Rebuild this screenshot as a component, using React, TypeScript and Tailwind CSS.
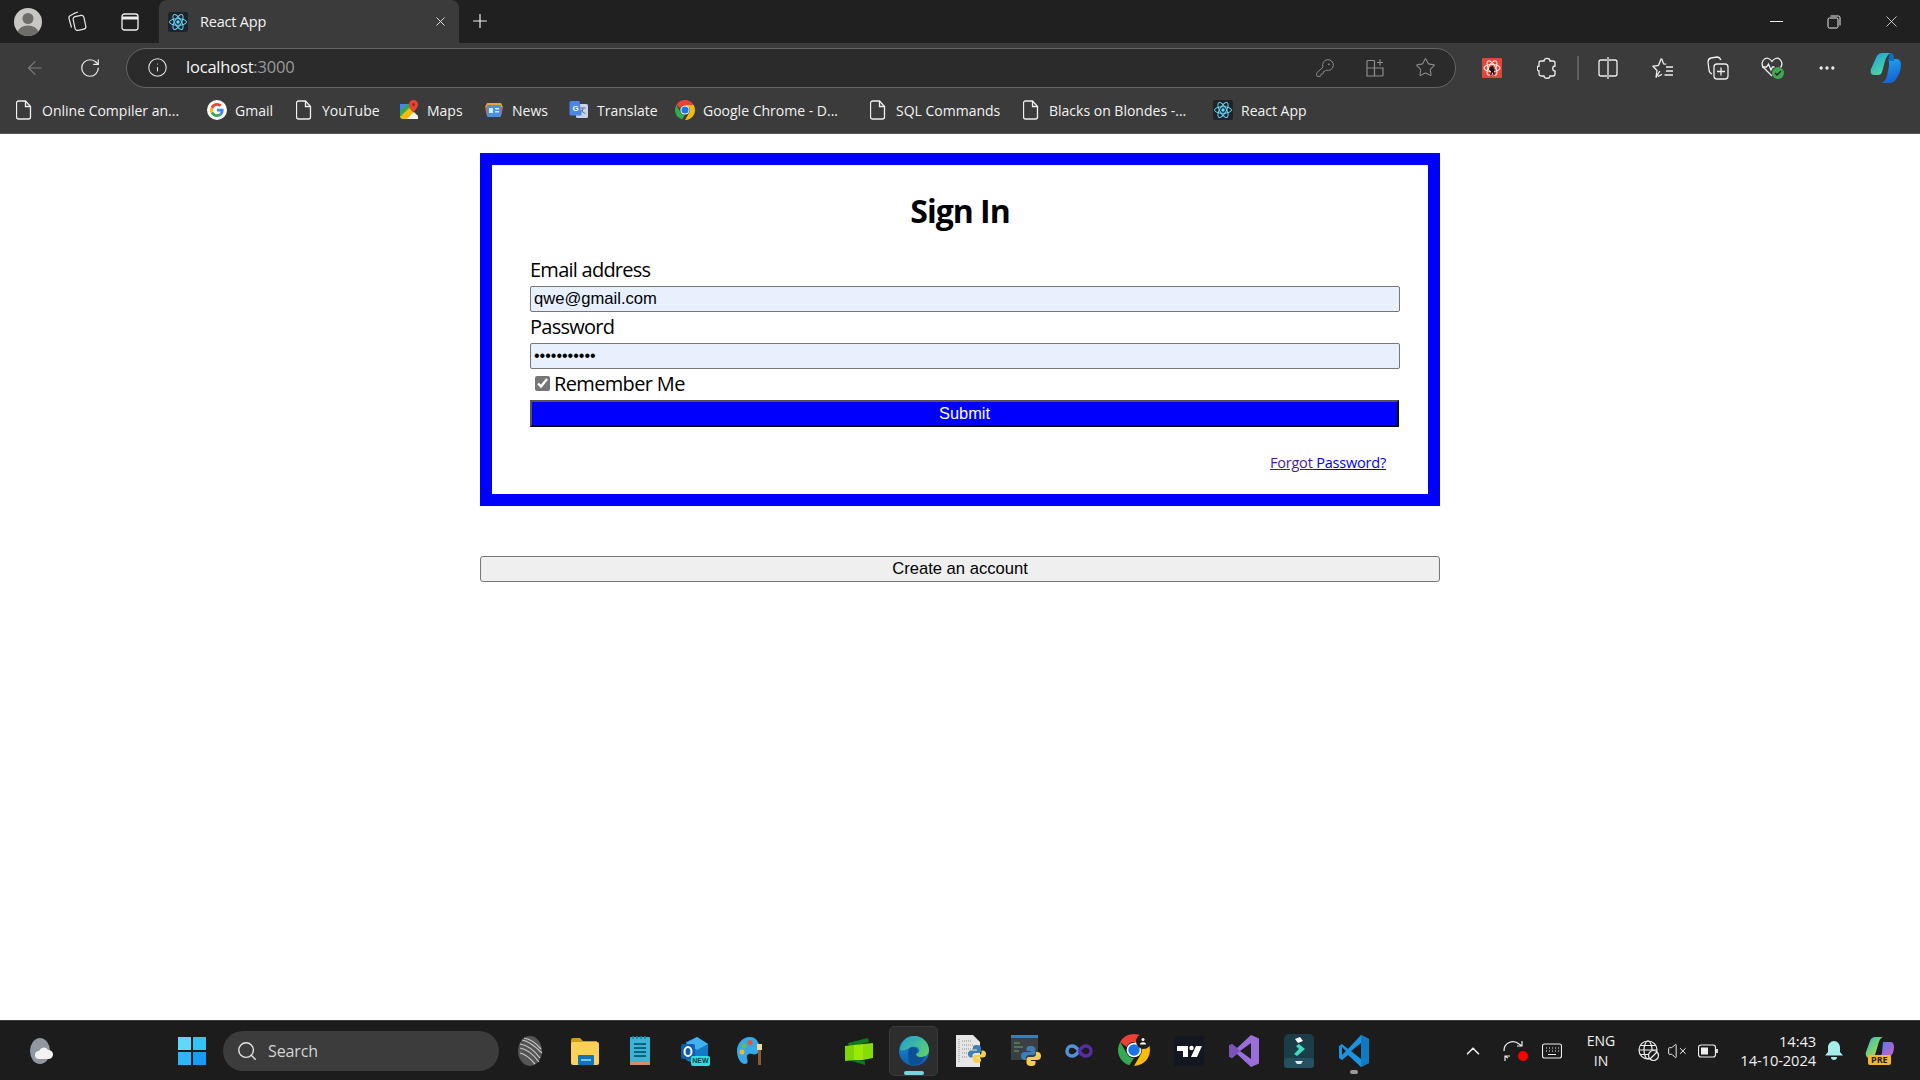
import { ReactNode } from "react";
import { ArrowLeft, ChevronUp, Info, KeyRound, MoreHorizontal, Plus, RotateCw, Search, Star, VolumeX, X } from "lucide-react";

const uiFont = "font-['Open_Sans','Noto_Sans',sans-serif]";

function ReactLogo({ size = 20 }: { size?: number }) {
  return (
    <svg width={size} height={size} viewBox="0 0 20 20">
      <rect width="20" height="20" rx="2" fill="#20232a" />
      <g fill="none" stroke="#61dafb" strokeWidth="1">
        <ellipse cx="10" cy="10" rx="8.5" ry="3.3" />
        <ellipse cx="10" cy="10" rx="8.5" ry="3.3" transform="rotate(60 10 10)" />
        <ellipse cx="10" cy="10" rx="8.5" ry="3.3" transform="rotate(120 10 10)" />
      </g>
      <circle cx="10" cy="10" r="1.7" fill="#61dafb" />
    </svg>
  );
}

function DocIcon() {
  return (
    <svg width="16" height="20" viewBox="0 0 16 20" fill="none" stroke="#f0f0f0" strokeWidth="1.3">
      <path d="M2.5 1h7l5 5.5v10.5a2 2 0 0 1-2 2h-10a2 2 0 0 1-2-2v-14a2 2 0 0 1 2-2z" />
      <path d="M9.5 1v5.5h5" />
    </svg>
  );
}

function GoogleLogo() {
  return (
    <svg width="20" height="20" viewBox="0 0 20 20">
      <circle cx="10" cy="10" r="10" fill="#fff" />
      <path d="M16.6 10.2c0-.5 0-1-.1-1.400H10v2.700h3.700c-.2.900-.7 1.600-1.400 2.100l2.200 1.700c1.300-1.200 2.100-3 2.100-5.100z" fill="#4285f4" />
      <path d="M10 17c1.900 0 3.400-.6 4.500-1.700l-2.200-1.700c-.6.400-1.400.7-2.300.7-1.800 0-3.300-1.200-3.900-2.800l-2.300 1.800C5 15.500 7.300 17 10 17z" fill="#34a853" />
      <path d="M6.100 11.500c-.3-.9-.3-1.900 0-2.800L3.800 6.900c-1 1.900-1 4.300 0 6.300z" fill="#fbbc05" />
      <path d="M10 5.800c1 0 1.900.3 2.600 1l2-2C13.400 3.700 11.800 3 10 3 7.300 3 5 4.500 3.800 6.900l2.300 1.800C6.700 7 8.200 5.800 10 5.800z" fill="#ea4335" />
    </svg>
  );
}

function MapsLogo() {
  return (
    <svg width="20" height="20" viewBox="0 0 20 20">
      <path d="M1 4l9 0 7 15H3a2 2 0 0 1-2-2z" fill="#34a853" />
      <path d="M1 17L10 8l9 9v1a1 1 0 0 1-1 1H3z" fill="#fbbc05" />
      <path d="M1 4h7L1 11z" fill="#4285f4" />
      <path d="M8 19l7-7 4 4v3z" fill="#f1f3f4" />
      <path d="M14.500 0a4.500 4.500 0 0 0-4.500 4.500c0 3 4.500 7.500 4.500 7.500S19 7.500 19 4.500A4.500 4.500 0 0 0 14.500 0z" fill="#ea4335" />
      <circle cx="14.500" cy="4.500" r="1.500" fill="#a52714" />
    </svg>
  );
}

function NewsLogo() {
  return (
    <svg width="20" height="20" viewBox="0 0 20 20">
      <path d="M3 3h14l2 4H1z" fill="#e3a33a" />
      <path d="M1 7h18l-1.500 8h-15z" fill="#e05b4b" />
      <rect x="3" y="5" width="14" height="12" rx="1" fill="#4a90e2" />
      <rect x="5" y="8" width="4" height="5" fill="#dbe8fa" />
      <rect x="11" y="8" width="4" height="1.500" fill="#dbe8fa" />
      <rect x="11" y="11" width="4" height="1.500" fill="#dbe8fa" />
    </svg>
  );
}

function TranslateLogo() {
  return (
    <svg width="20" height="20" viewBox="0 0 20 20">
      <rect x="7" y="4" width="12" height="14" rx="1.500" fill="#c9d3e6" />
      <path d="M11.500 8h5M14 8c0 3-2 5-3 5.500M12 10c1 1.500 3 3 4.500 3.500" stroke="#5f6b80" strokeWidth="1" fill="none" />
      <path d="M2 1h8.500l2 14.500H2a1.500 1.500 0 0 1-1.500-1.500V2.500A1.500 1.500 0 0 1 2 1z" fill="#4a86e8" />
      <text x="3.500" y="11" fontSize="8" fontWeight="700" fill="#fff" fontFamily="'Liberation Sans', sans-serif">G</text>
    </svg>
  );
}

function ChromeLogo({ size = 20 }: { size?: number }) {
  return (
    <svg width={size} height={size} viewBox="0 0 20 20">
      <path d="M10 0a10 10 0 0 1 8.660 5H10a5 5 0 0 0-4.660 3.200L1.340 5A10 10 0 0 1 10 0z" fill="#ea4335" />
      <path d="M1.340 5L5.700 12.500A5 5 0 0 0 10 15l-2.900 4.570A10 10 0 0 1 1.340 5z" fill="#34a853" />
      <path d="M18.660 5A10 10 0 0 1 10 20l4.330-7.500A5 5 0 0 0 14.330 7.500L10 5z" fill="#fbbc05" />
      <circle cx="10" cy="10" r="4.600" fill="#fff" />
      <circle cx="10" cy="10" r="3.600" fill="#1a73e8" />
    </svg>
  );
}

function Bookmark({ icon, label, width, left }: { icon: ReactNode; label: string; width: string; left: string }) {
  return (
    <div className={`flex items-center ${left}`}>
      <span className="flex w-[20px] justify-center">{icon}</span>
      <span className={`ml-[8px] whitespace-nowrap text-[14px] text-[#f3f3f3] ${width}`}>{label}</span>
    </div>
  );
}

function TabStrip() {
  return (
    <div className="flex h-[43px] items-end bg-[#202020]">
      <div className="ml-[14px] mb-[7px] flex h-[28px] w-[28px] items-end justify-center overflow-hidden rounded-full bg-[#c9c7c3]">
        <svg width="28" height="28" viewBox="0 0 28 28" fill="#6f6d6a">
          <circle cx="14" cy="10.500" r="5.500" />
          <ellipse cx="14" cy="24" rx="10" ry="6.500" />
        </svg>
      </div>
      <div className="ml-[24px] mb-[11px]">
        <svg width="22" height="22" viewBox="0 0 22 22" fill="none" stroke="#e8e8e8" strokeWidth="1.200">
          <rect x="8" y="6" width="11" height="14" rx="2.500" transform="rotate(-12 13 13)" />
          <path d="M5.500 17.500L3 8.500a2.500 2.500 0 0 1 1.500-3l4.500-2.500" />
          <path d="M8 3.500l4-1.500" />
        </svg>
      </div>
      <div className="ml-[33px] mb-[12px]">
        <svg width="18" height="18" viewBox="0 0 18 18" fill="none" stroke="#eeeeee" strokeWidth="1.300">
          <rect x="1" y="1" width="16" height="16" rx="2.500" />
          <path d="M1 5h16" strokeWidth="3" />
        </svg>
      </div>
      <div className={`ml-[20px] flex h-[43px] w-[300px] items-center rounded-t-[8px] bg-[#3b3b3b] pl-[9px] ${uiFont}`}>
        <ReactLogo />
        <span className="ml-[12px] text-[14.500px] tracking-[-0.2px] text-[#f3f3f3]">React App</span>
        <X className="ml-auto mr-[11px] text-[#e5e5e5]" size={15} strokeWidth={1.500} />
      </div>
      <Plus className="ml-[10px] mb-[11px] text-[#eeeeee]" size={22} strokeWidth={1.300} />
      <div className="ml-auto flex items-center self-center text-[#eeeeee]">
        <div className="w-[57px]"><div className="mx-auto h-[1px] w-[13px] bg-[#eeeeee]" /></div>
        <div className="flex w-[57px] justify-center">
          <svg width="14" height="14" viewBox="0 0 14 14" fill="none" stroke="#eeeeee" strokeWidth="1">
            <rect x="1" y="3" width="10" height="10" rx="1.500" />
            <path d="M3.500 1h8a1.500 1.500 0 0 1 1.500 1.500v8" />
          </svg>
        </div>
        <div className="flex w-[58px] justify-center"><X size={19} strokeWidth={1} /></div>
      </div>
    </div>
  );
}

function RedExtension() {
  return (
    <svg width="20" height="20" viewBox="0 0 20 20">
      <rect width="20" height="20" rx="1" fill="#e0473a" />
      <g fill="none" stroke="#fbe5e2" strokeWidth="1.100">
        <ellipse cx="10" cy="10" rx="8" ry="3.500" />
        <ellipse cx="10" cy="10" rx="8" ry="3.500" transform="rotate(60 10 10)" />
        <ellipse cx="10" cy="10" rx="8" ry="3.500" transform="rotate(120 10 10)" />
      </g>
      <path d="M8 9l3-1 1 3 2 1-2 1 1 4h-1.500l-1-3-1 3H8l1-4-2-1z" fill="#1a1a1a" />
    </svg>
  );
}

function Toolbar() {
  return (
    <div className={`flex h-[45px] items-center bg-[#3b3b3b] pt-[4px] ${uiFont}`}>
      <ArrowLeft className="ml-[24px] text-[#7d7d7d]" size={22} strokeWidth={1.200} />
      <RotateCw className="ml-[33px] text-[#eeeeee]" size={22} strokeWidth={1.300} />
      <div className="ml-[25px] flex h-[40px] w-[1330px] items-center rounded-full border border-[#666666] bg-[#2b2b2b] pl-[20px] pr-[19px]">
        <Info className="text-[#e8e8e8]" size={21} strokeWidth={1.200} />
        <span className="ml-[18px] text-[16.500px] tracking-[-0.2px] text-[#f5f5f5]">
          localhost<span className="text-[#9a9a9a]">:3000</span>
        </span>
        <KeyRound className="ml-auto text-[#8d8d8d]" size={20} strokeWidth={1.200} />
        <svg className="ml-[30px]" width="20" height="20" viewBox="0 0 20 20" fill="none" stroke="#8d8d8d" strokeWidth="1.200">
          <path d="M9.500 2.500H3a1 1 0 0 0-1 1V18h15a1 1 0 0 0 1-1V10H2M9.500 2.500V18" />
          <path d="M15 1.500v6M12 4.500h6" />
        </svg>
        <Star className="ml-[30px] text-[#8d8d8d]" size={21} strokeWidth={1.200} />
      </div>
      <span className="ml-[26px]"><RedExtension /></span>
      <svg className="ml-[35px]" width="20" height="22" viewBox="0 0 20 22" fill="none" stroke="#eeeeee" strokeWidth="1.300">
        <path d="M7 4c0-3.500 6-3.500 6 0h3a2 2 0 0 1 2 2v3c-3 0-3 5 0 5v3a2 2 0 0 1-2 2h-3c0 3-6 3-6 0H4a2 2 0 0 1-2-2v-3c-2.500 0-2.500-5 0-5V6a2 2 0 0 1 2-2z" />
      </svg>
      <div className="ml-[20px] h-[24px] w-[2px] bg-[#5f5f5f]" />
      <svg className="ml-[19px]" width="20" height="22" viewBox="0 0 20 22" fill="none" stroke="#eeeeee" strokeWidth="1.300">
        <path d="M9 3H3a2 2 0 0 0-2 2v12a2 2 0 0 0 2 2h6M11 3h6a2 2 0 0 1 2 2v12a2 2 0 0 1-2 2h-6M10 0v22" />
      </svg>
      <svg className="ml-[34px]" width="22" height="22" viewBox="0 0 22 22" fill="none" stroke="#eeeeee" strokeWidth="1.300">
        <path d="M9.500 1.500l2.200 5.500 2.500.2M7.800 14l-3.800 6.500 1-7-4-4.200 5.500-1 2.800-6.800M6 19.500l4-2.200" />
        <path d="M14 10h7M14 14h7M12.500 18h8.500" />
      </svg>
      <svg className="ml-[33px]" width="22" height="24" viewBox="0 0 22 24" fill="none" stroke="#eeeeee" strokeWidth="1.300">
        <path d="M5 18c-2-1-3-2-3-4L1 6c0-2 1-3.500 3-4l6-1c2 0 3 1 4 3" />
        <rect x="7" y="8" width="14" height="15" rx="3" />
        <path d="M14 11.500v8M10 15.500h8" />
      </svg>
      <div className="relative ml-[32px] h-[24px] w-[22px]">
        <svg width="22" height="22" viewBox="0 0 22 22" fill="none" stroke="#eeeeee" strokeWidth="1.300">
          <path d="M11 20L2.500 11.500C-1 7 3 1 7.500 2.500c1.500.5 2.500 1.500 3.500 3 1-1.500 2-2.500 3.500-3C19 1 23 7 19.500 11.500" />
          <path d="M1 11h4.500l2-3 2.500 6 1.500-3h2" />
        </svg>
        <span className="absolute left-[11px] top-[11px] flex h-[12px] w-[12px] items-center justify-center rounded-full bg-[#41a651]">
          <svg width="8" height="8" viewBox="0 0 8 8" fill="none" stroke="#1d1d1d" strokeWidth="1.400"><path d="M1 4l2 2 4-4" /></svg>
        </span>
      </div>
      <MoreHorizontal className="ml-[34px] text-[#eeeeee]" size={20} />
      <svg className="ml-[33px]" width="32" height="32" viewBox="0 0 32 32">
        <defs>
          <linearGradient id="cpA" x1="0" y1="0" x2="0.600" y2="1">
            <stop offset="0" stopColor="#1b9de2" />
            <stop offset="1" stopColor="#4fdc9c" />
          </linearGradient>
          <linearGradient id="cpB" x1="0" y1="0" x2="0.300" y2="1">
            <stop offset="0" stopColor="#1fa8f0" />
            <stop offset="1" stopColor="#1565d8" />
          </linearGradient>
        </defs>
        <path d="M12 1h9c-3 1-5 4-6 8l-3 11c-.5 2-2 3-4 3H4c-3 0-4-3-3-6l5-11c1-3 3-5 6-5z" fill="url(#cpA)" />
        <path d="M19 7h7c3 0 5 2 5 5 0 6-2 11-5 15-1 2-3 4-6 4h-9c3-1 5-3 6-7l2-10c0-3 0-5 0-7z" fill="url(#cpB)" />
        <path d="M20 1c3 0 4 2 4 5v3h-6z" fill="#0e6fbe" />
      </svg>
    </div>
  );
}

function BookmarksBar() {
  return (
    <div className={`flex h-[46px] items-center border-b border-[#5a5a5a] bg-[#3b3b3b] pb-[1px] ${uiFont}`}>
      <Bookmark left="ml-[14px]" width="w-[139px]" icon={<DocIcon />} label="Online Compiler an..." />
      <Bookmark left="ml-[26px]" width="w-[38px]" icon={<GoogleLogo />} label="Gmail" />
      <Bookmark left="ml-[21px]" width="w-[57px]" icon={<DocIcon />} label="YouTube" />
      <Bookmark left="ml-[20px]" width="w-[37px]" icon={<MapsLogo />} label="Maps" />
      <Bookmark left="ml-[20px]" width="w-[36px]" icon={<NewsLogo />} label="News" />
      <Bookmark left="ml-[21px]" width="w-[58px]" icon={<TranslateLogo />} label="Translate" />
      <Bookmark left="ml-[20px]" width="w-[141px]" icon={<ChromeLogo />} label="Google Chrome - D..." />
      <Bookmark left="ml-[24px]" width="w-[106px]" icon={<DocIcon />} label="SQL Commands" />
      <Bookmark left="ml-[19px]" width="w-[141px]" icon={<DocIcon />} label="Blacks on Blondes -..." />
      <Bookmark left="ml-[23px]" width="w-[67px]" icon={<ReactLogo />} label="React App" />
    </div>
  );
}

function SignInForm() {
  return (
    <div className="mx-auto mt-[19px] h-[353px] w-[960px] border-[12px] border-[#0000ff] pl-[38px] pr-[28px]">
      <h1 className={`pr-[10px] pt-[21px] text-center text-[32px] leading-[50px] font-bold text-black ${uiFont} tracking-[-1px]`}>Sign In</h1>
      <label className={`mt-[19px] block h-[31px] text-[20px] leading-[29px] tracking-[-0.75px] text-black ${uiFont}`}>Email address</label>
      <input
        readOnly
        value="qwe@gmail.com"
        className="block h-[26px] w-full rounded-[2px] border border-[#767676] bg-[#e8f0fe] px-[3px] font-['Liberation_Sans',sans-serif] text-[16.600px] text-black"
      />
      <label className={`block h-[31px] text-[20px] leading-[29px] tracking-[-0.75px] text-black ${uiFont}`}>Password</label>
      <input
        readOnly
        type="password"
        value="qwe12345678"
        className="block h-[26px] w-full rounded-[2px] border border-[#767676] bg-[#e8f0fe] px-[3px] font-['Liberation_Sans',sans-serif] text-[16px] text-black"
      />
      <div className={`flex h-[31px] items-center pb-[2px] text-[20px] tracking-[-0.65px] text-black ${uiFont}`}>
        <input readOnly checked type="checkbox" className="ml-[5px] h-[15px] w-[15px] accent-[#767676]" />
        <span className="ml-[4px]">Remember Me</span>
      </div>
      <button className="block h-[27px] w-[869px] border-2 border-t-[#555555] border-l-[#555555] border-r-black border-b-black bg-[#0000ff] pb-[2px] font-['Liberation_Sans',sans-serif] text-[16.400px] leading-[20px] text-white">
        Submit
      </button>
      <div className={`mt-[23px] text-right ${uiFont}`}>
        <a href="#" className="mr-[14px] text-[14.500px] tracking-[-0.2px]">
          <span className="text-[#4a1a9c] underline">Forgot</span>
          <span className="text-[#0000ee] underline"> Password?</span>
        </a>
      </div>
    </div>
  );
}

function Spiral() {
  return (
    <svg width="26" height="32" viewBox="0 0 26 32">
      <ellipse cx="13" cy="16" rx="12" ry="15" fill="#555555" />
      <g stroke="#c8c8c8" strokeWidth="1.200" fill="none">
        <path d="M3 9c6 1 14 6 20 14M3 13c6 1 13 6 19 14M5 5c6 1 13 6 20 13M7 3c6 1 12 5 17 11M3 18c5 1 10 5 15 11" />
      </g>
    </svg>
  );
}

function Folder() {
  return (
    <svg width="30" height="30" viewBox="0 0 30 30">
      <path d="M1 4a2 2 0 0 1 2-2h7l3 3h14v6H1z" fill="#d99a0b" />
      <rect x="1" y="6" width="28" height="23" rx="2" fill="#fcd15b" />
      <rect x="8" y="19" width="16" height="10" rx="1" fill="#1274ba" />
      <rect x="11" y="23" width="10" height="2" fill="#7cc4ee" />
    </svg>
  );
}

function Notepad() {
  return (
    <svg width="22" height="30" viewBox="0 0 22 30">
      <rect x="1" y="1" width="20" height="28" rx="1" fill="#39b5d8" />
      <rect x="1" y="26" width="20" height="3" fill="#c89468" />
      <path d="M4 0v3M8 0v3M12 0v3M16 0v3" stroke="#1b7f9e" strokeWidth="1.500" />
      <path d="M5 8h12M5 12h12M5 16h12M5 20h12" stroke="#0d5f7c" strokeWidth="2" />
    </svg>
  );
}

function Outlook() {
  return (
    <div className="relative h-[30px] w-[30px]">
      <svg width="30" height="30" viewBox="0 0 30 30">
        <path d="M6 6l11-5 11 7v15l-11 6-11-5z" fill="#1279c9" />
        <path d="M17 1l11 7-11 6-11-7z" fill="#3fb1ef" />
        <rect x="1" y="8" width="14" height="15" rx="2" fill="#0f5ca8" />
        <ellipse cx="8" cy="15.500" rx="3.500" ry="4.500" fill="none" stroke="#fff" strokeWidth="2" />
      </svg>
      <span className="absolute bottom-0 right-0 rounded-[2px] bg-[#2fe0da] px-[1px] font-['Liberation_Sans',sans-serif] text-[7px] leading-[10px] font-bold text-[#073b4c]">NEW</span>
    </div>
  );
}

function Paint() {
  return (
    <svg width="28" height="30" viewBox="0 0 28 30">
      <path d="M14 1C6 1 1 8 1 15c0 6 3 13 8 13 3 0 3-3 2-6-1-3 2-5 5-4 3 1 6 0 7-3 2-6-2-14-9-14z" fill="#37a9e8" />
      <circle cx="8" cy="10" r="2.500" fill="#6cbf45" />
      <circle cx="14" cy="6.500" r="2.500" fill="#e9553f" />
      <circle cx="6" cy="16" r="2.500" fill="#f2b632" />
      <rect x="22" y="13" width="3" height="16" fill="#8a5a32" />
      <rect x="21" y="8" width="5" height="6" fill="#f2d9a0" />
    </svg>
  );
}

function GreenBars() {
  return (
    <svg width="30" height="30" viewBox="0 0 30 30">
      <path d="M4 7l20-5 1 4-20 5zM4 24l17 5v-4l-17-3z" fill="#0e7a1c" />
      <path d="M1 10l9-1v15l-9 1z" fill="#7ed507" />
      <path d="M10 9l9-1v16l-9 0z" fill="#9ae804" />
      <path d="M19 8l10-1v15l-10 2z" fill="#86dc05" />
    </svg>
  );
}

function Edge() {
  return (
    <svg width="30" height="32" viewBox="0 0 30 32">
      <defs>
        <linearGradient id="edA" x1="0" y1="0" x2="1" y2="0.800">
          <stop offset="0" stopColor="#1d9fd8" />
          <stop offset="1" stopColor="#5ecf6a" />
        </linearGradient>
        <linearGradient id="edB" x1="0" y1="0" x2="0" y2="1">
          <stop offset="0" stopColor="#1c8fe0" />
          <stop offset="1" stopColor="#0f5ea8" />
        </linearGradient>
      </defs>
      <circle cx="15" cy="16" r="15" fill="url(#edB)" />
      <path d="M1 14C3 5 9 1 15 1c9 0 15 7 15 14 0 5-4 7-8 7-3 0-5-1-5-3 3-1 4-3 3-5-2-3-7-3-10-1-4 2-7 4-9 1z" fill="url(#edA)" />
      <path d="M9 18c0-5 4-7 8-5 2 1 2 4 0 6 0 3 3 4 6 3l3-.5c-3 6-7 9-12 9-4 0-5-8-5-12.500z" fill="#0d4f94" />
    </svg>
  );
}

function PythonLogo({ size = 20 }: { size?: number }) {
  return (
    <svg width={size} height={size} viewBox="0 0 20 20">
      <path d="M10 0C6 0 5.500 1.500 5.500 3.200V5H10v1H3.500C1.500 6 0 7.500 0 10s1.500 4 3.500 4H5v-2.200C5 10 6.500 9 8 9h4c1.500 0 2.500-1 2.500-2.500V3.200C14.500 1.500 13 0 10 0z" fill="#3d7fb5" />
      <path d="M10 20c4 0 4.500-1.500 4.500-3.200V15H10v-1h6.500c2 0 3.500-1.500 3.500-4s-1.500-4-3.500-4H15v2.200C15 10 13.500 11 12 11H8c-1.500 0-2.500 1-2.500 2.500v3.300C5.500 18.500 7 20 10 20z" fill="#f7cf4f" />
    </svg>
  );
}

function PythonFile() {
  return (
    <div className="relative ml-[4px] h-[32px] w-[30px]">
      <svg width="24" height="32" viewBox="0 0 24 32">
        <path d="M0 0h17l7 7v25H0z" fill="#e6e6e6" />
        <path d="M3 4v24M6 6h10M6 10h12M6 14h12M6 18h8M6 22h6" stroke="#8f8f8f" strokeWidth="1" strokeDasharray="1 1" />
      </svg>
      <span className="absolute bottom-[4px] right-0"><PythonLogo size={18} /></span>
    </div>
  );
}

function PythonIde() {
  return (
    <div className="relative ml-[4px] h-[32px] w-[30px]">
      <svg width="27" height="27" viewBox="0 0 27 27">
        <rect width="27" height="25" fill="#3a3f44" />
        <rect width="27" height="3" fill="#2a82c9" />
        <path d="M3 8h6M3 12h9M3 16h5" stroke="#5fae5f" strokeWidth="1" />
      </svg>
      <span className="absolute bottom-[1px] right-0"><PythonLogo /></span>
    </div>
  );
}

function Infinity2() {
  return (
    <svg width="30" height="16" viewBox="0 0 30 16" fill="none" strokeWidth="3.500">
      <path d="M15 8c-2-3-4-5-7-5a5 5 0 0 0 0 10c3 0 5-2 7-5" stroke="#4f93d8" />
      <path d="M15 8c2-3 4-5 7-5a5 5 0 0 1 0 10c-3 0-5-2-7-5" stroke="#5b2aa8" />
    </svg>
  );
}

function ChromeBadge() {
  return (
    <div className="relative h-[34px] w-[32px]">
      <ChromeLogo size={32} />
      <span className="absolute right-[-1px] top-0 flex h-[15px] w-[15px] items-center justify-center rounded-full bg-[#1d1d1d]">
        <svg width="8" height="8" viewBox="0 0 8 8" fill="#fff"><circle cx="4" cy="2.500" r="1.500" /><path d="M1 7.500c0-3 6-3 6 0z" /></svg>
      </span>
    </div>
  );
}

function TradingView() {
  return (
    <svg width="30" height="30" viewBox="0 0 30 30">
      <rect width="30" height="30" fill="#131722" />
      <path d="M3 10h11v11H9v-6H3z" fill="#fff" />
      <circle cx="17.500" cy="12" r="2.200" fill="#fff" />
      <path d="M22 10h6l-5 11h-6z" fill="#fff" />
    </svg>
  );
}

function VisualStudio() {
  return (
    <svg width="30" height="34" viewBox="0 0 30 34">
      <path d="M22 1l8 3.500v25L22 33 8 20l-5 4-3-1.500v-11L3 10l5 4z" fill="#9a6fdc" />
      <path d="M22 9v16L11 17z" fill="#1d1d1d" />
      <path d="M3 13l3 4-3 4z" fill="#1d1d1d" />
      <path d="M0 11.500L3 10l5 4 3 3-8 7-3-1.500z" fill="#7b52b9" />
    </svg>
  );
}

function Filmora() {
  return (
    <svg width="30" height="34" viewBox="0 0 30 34">
      <rect width="30" height="34" rx="5" fill="#1a3d49" />
      <rect y="24" width="30" height="10" rx="3" fill="#24505f" />
      <path d="M11 5l5-2 3 4-5 2z" fill="#ffffff" />
      <path d="M15 10l6 5-8 7-3-2 5-5-3-3z" fill="#3fdcc0" />
      <path d="M11 27h8l-2 3h-4z" fill="#dfe8ea" />
    </svg>
  );
}

function VSCode() {
  return (
    <svg width="30" height="34" viewBox="0 0 30 34">
      <path d="M22 1l8 4v24l-8 4-13-12-6 5-3-2V12l3-2 6 5z" fill="#1c93e2" />
      <path d="M22 1v32l8-4V5z" fill="#0f7ac2" />
      <path d="M22 9v16l-10-8z" fill="#1d1d1d" />
      <path d="M3 13l4 4-4 4z" fill="#1d1d1d" />
    </svg>
  );
}

function TaskIcon({ children }: { children: ReactNode }) {
  return <div className="flex h-[50px] w-[55px] items-center justify-center">{children}</div>;
}

function Taskbar() {
  return (
    <div className={`flex h-[60px] items-center border-t border-[#3a3a3a] bg-[#1c1c1c] ${uiFont}`}>
      <svg className="ml-[29px]" width="28" height="28" viewBox="0 0 28 28">
        <ellipse cx="11" cy="14" rx="10" ry="13" fill="#8f97a1" />
        <path d="M10 22a4 4 0 0 1 0-8 5 5 0 0 1 9-1 4.500 4.500 0 0 1 1 9z" fill="#f2f2f2" />
      </svg>
      <div className="ml-[121px] grid h-[28px] w-[28px] grid-cols-2 gap-[2px]">
        <span className="bg-[#5fd8fb]" />
        <span className="bg-[#34c3f7]" />
        <span className="bg-[#2fb4f6]" />
        <span className="bg-[#169df3]" />
      </div>
      <div className="ml-[17px] flex h-[40px] w-[276px] items-center rounded-full bg-[#3c3c3c] pl-[13px]">
        <Search className="text-[#e5e5e5]" size={22} strokeWidth={1.500} />
        <span className="ml-[10px] text-[16px] tracking-[-0.1px] text-[#d5d5d5]">Search</span>
      </div>
      <div className="ml-[3px] flex items-center">
        <TaskIcon><Spiral /></TaskIcon>
        <TaskIcon><Folder /></TaskIcon>
        <TaskIcon><Notepad /></TaskIcon>
        <TaskIcon><Outlook /></TaskIcon>
        <TaskIcon><Paint /></TaskIcon>
      </div>
      <div className="ml-[54px] flex items-center">
        <TaskIcon><GreenBars /></TaskIcon>
        <div className="flex h-[50px] w-[55px] flex-col items-center justify-between">
          <div className="flex h-[50px] w-[49px] flex-col items-center rounded-[5px] border border-[#3a3a3a] bg-[#2d2d2d] pt-[8px]">
            <Edge />
            <span className="mt-[4px] h-[4px] w-[20px] rounded-full bg-[#76d5df]" />
          </div>
        </div>
        <TaskIcon><PythonFile /></TaskIcon>
        <TaskIcon><PythonIde /></TaskIcon>
        <TaskIcon><Infinity2 /></TaskIcon>
        <TaskIcon><ChromeBadge /></TaskIcon>
        <TaskIcon><TradingView /></TaskIcon>
        <TaskIcon><VisualStudio /></TaskIcon>
        <TaskIcon><Filmora /></TaskIcon>
        <div className="flex h-[50px] w-[55px] flex-col items-center justify-center pt-[6px]">
          <VSCode />
          <span className="mt-[2px] h-[4px] w-[8px] rounded-full bg-[#9a9a9a]" />
        </div>
      </div>
      <ChevronUp className="ml-[81px] text-[#f0f0f0]" size={22} strokeWidth={1.800} />
      <div className="relative ml-[18px] h-[24px] w-[24px]">
        <svg width="24" height="24" viewBox="0 0 24 24" fill="none" stroke="#eeeeee" strokeWidth="1.200">
          <path d="M2 12a9 9 0 0 1 15-7l3 2M20 2v5h-5M6 19l-3-2M3 22v-5h5" />
        </svg>
        <span className="absolute bottom-[2px] right-[-2px] h-[10px] w-[10px] rounded-full bg-[#ff0000]" />
      </div>
      <svg className="ml-[16px]" width="20" height="16" viewBox="0 0 20 16" fill="none" stroke="#eeeeee" strokeWidth="1.100">
        <rect x="0.500" y="1" width="19" height="14" rx="2" />
        <path d="M4 5h1M7 5h1M10 5h1M13 5h1M16 5h1M4 8h1M7 8h1M10 8h1M13 8h1M16 8h1M6 11.500h8" />
      </svg>
      <div className="ml-[23px] w-[32px] text-center text-[14px] leading-[20px] text-[#f0f0f0]">
        <div>ENG</div>
        <div>IN</div>
      </div>
      <svg className="ml-[21px]" width="22" height="22" viewBox="0 0 22 22" fill="none" stroke="#eeeeee" strokeWidth="1.200">
        <circle cx="10" cy="10" r="9" />
        <ellipse cx="10" cy="10" rx="4" ry="9" />
        <path d="M1 10h18M2 5.500h16M2 14.500h8" />
        <circle cx="15.500" cy="15.500" r="5" fill="#1c1c1c" />
        <path d="M12 19l7-7" />
      </svg>
      <VolumeX className="ml-[7px] text-[#eeeeee]" size={20} strokeWidth={1.200} />
      <svg className="ml-[11px]" width="20" height="14" viewBox="0 0 20 14" fill="none" stroke="#eeeeee" strokeWidth="1.200">
        <rect x="0.500" y="1" width="17" height="12" rx="2.500" />
        <rect x="3" y="3.500" width="7" height="7" fill="#eeeeee" stroke="none" />
        <path d="M19 5v4" strokeWidth="1.800" />
      </svg>
      <div className="ml-[20px] w-[78px] text-right text-[14.700px] leading-[19px] tracking-[-0.1px] text-[#f0f0f0]">
        <div>14:43</div>
        <div className="whitespace-nowrap">14-10-2024</div>
      </div>
      <svg className="ml-[9px]" width="18" height="20" viewBox="0 0 18 20" fill="#a7ecec">
        <path d="M9 0c3.500 0 6 3 6 6.500V11l3 3.500H0L3 11V6.500C3 3 5.500 0 9 0z" />
        <path d="M6 16h6a3 3 0 0 1-6 0z" />
      </svg>
      <div className="relative ml-[22px] h-[30px] w-[30px]">
        <svg width="30" height="24" viewBox="0 0 30 24">
          <defs>
            <linearGradient id="prA" x1="0" y1="0" x2="1" y2="1">
              <stop offset="0" stopColor="#2db4e8" />
              <stop offset="0.500" stopColor="#7cd36b" />
              <stop offset="1" stopColor="#f2c63a" />
            </linearGradient>
            <linearGradient id="prB" x1="0" y1="0" x2="1" y2="1">
              <stop offset="0" stopColor="#3f7ff0" />
              <stop offset="1" stopColor="#e25cc4" />
            </linearGradient>
          </defs>
          <path d="M10 1h8c-3 1-4 4-5 8l-3 10c-.5 2-2 3-4 3H4c-2 0-4-3-3-6l4-11c1-3 3-4 5-4z" fill="url(#prA)" />
          <path d="M18 6h7c3 0 4 2 4 5 0 5-2 8-4 10-1 1-2 2-4 2h-9c3-1 4-3 5-6z" fill="url(#prB)" />
        </svg>
        <span className="absolute bottom-[1px] left-[3px] rounded-[2px] bg-[#f4b92c] px-[3px] text-[9px] leading-[10px] font-bold text-[#222222]">PRE</span>
      </div>
    </div>
  );
}

export default function App() {
  return (
    <div className="flex h-[1080px] w-[1920px] flex-col overflow-hidden bg-white">
      <TabStrip />
      <Toolbar />
      <BookmarksBar />
      <main className="flex-1">
        <SignInForm />
        <button className="mx-auto mt-[50px] block h-[26px] w-[960px] rounded-[3px] border border-[#767676] bg-[#efefef] font-['Liberation_Sans',sans-serif] text-[16.600px] text-black">
          Create an account
        </button>
      </main>
      <Taskbar />
    </div>
  );
}
